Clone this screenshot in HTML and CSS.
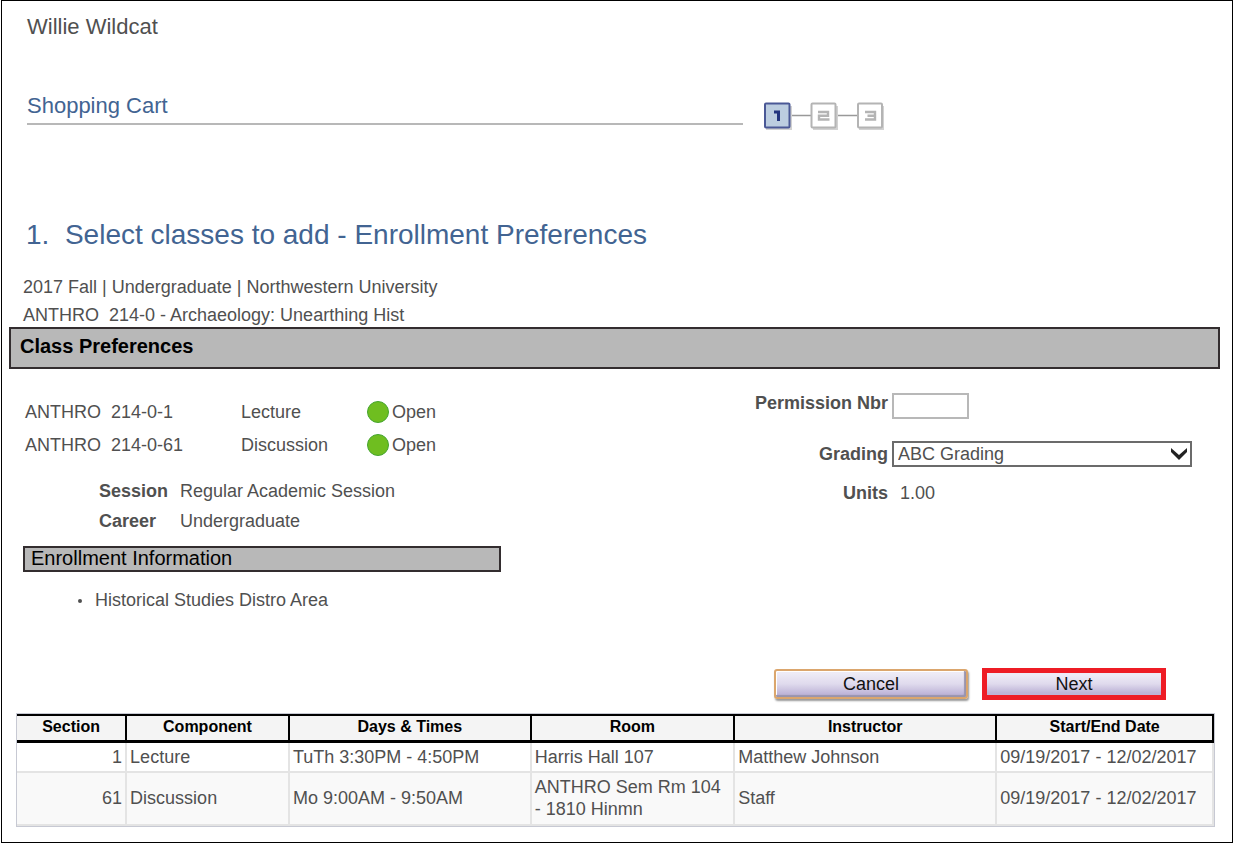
FILE: index.html
```html
<!DOCTYPE html>
<html lang="en">
<head>
<meta charset="utf-8">
<title>Shopping Cart - Enrollment Preferences</title>
<link rel="stylesheet" href="styles.css">
</head>
<body>
<main class="page">
  <p class="student">Willie Wildcat</p>

  <header class="cart-header">
    <h1 class="cart-title">Shopping Cart</h1>
    <svg class="steps" width="121" height="30" viewBox="0 0 121 30" role="img" aria-label="Step 1 of 3">
      <path d="M26 14.500H48M72 14.500H94M119 14.500H121" stroke="#999" stroke-width="1.500"/>
      <g fill="none" stroke="#d2d2d2" stroke-width="2">
        <path d="M3 28H28V5M50 28H74V5M96 28H120V5"/>
      </g>
      <rect x="2" y="2.500" width="24.500" height="24" rx="1" fill="#bccde0" stroke="#4a5896" stroke-width="2"/>
      <rect x="48.500" y="2.500" width="24" height="24" rx="1" fill="#fff" stroke="#b4b4b4" stroke-width="2"/>
      <rect x="95" y="2.500" width="24" height="24" rx="1" fill="#fff" stroke="#b4b4b4" stroke-width="2"/>
      <path d="M11 11H15.500V20" fill="none" stroke="#23357f" stroke-width="3"/>
      <path d="M55 11H65V14.800H56V18.500H66.500" fill="none" stroke="#b4b4b4" stroke-width="2.400"/>
      <path d="M102 11H112V18.500H102M104.500 14.800H111.500" fill="none" stroke="#b4b4b4" stroke-width="2.400"/>
    </svg>
  </header>

  <h2 class="step-title">1.&nbsp; Select classes to add - Enrollment Preferences</h2>

  <div class="context">
    <p>2017 Fall | Undergraduate | Northwestern University</p>
    <p>ANTHRO&nbsp; 214-0 - Archaeology: Unearthing Hist</p>
  </div>

  <h3 class="band">Class Preferences</h3>

  <div class="preferences">
    <section class="details">
      <ul class="classes">
        <li><span>ANTHRO&nbsp; 214-0-1</span><span>Lecture</span><span class="status"><i class="dot"></i>Open</span></li>
        <li><span>ANTHRO&nbsp; 214-0-61</span><span>Discussion</span><span class="status"><i class="dot"></i>Open</span></li>
      </ul>
      <dl class="facts">
        <dt>Session</dt><dd>Regular Academic Session</dd>
        <dt>Career</dt><dd>Undergraduate</dd>
      </dl>
      <h4 class="sub-band">Enrollment Information</h4>
      <ul class="info"><li>Historical Studies Distro Area</li></ul>
    </section>

    <form class="options">
      <label class="label" for="permission">Permission Nbr</label>
      <input class="permission" id="permission" type="text">
      <label class="label grading-label" for="grading">Grading</label>
      <div class="select-wrap">
        <select class="grading" id="grading"><option>ABC Grading</option></select>
        <svg class="chevron" width="18" height="12" viewBox="0 0 18 12" aria-hidden="true"><path d="M1 0L9 7L17 0V4L9 12L1 4Z" fill="#222"/></svg>
      </div>
      <span class="label">Units</span>
      <span class="units">1.00</span>
    </form>
  </div>

  <div class="actions">
    <button class="button cancel" type="button">Cancel</button>
    <button class="button next" type="button">Next</button>
  </div>

  <table class="schedule">
    <colgroup><col class="c-section"><col class="c-component"><col class="c-days"><col class="c-room"><col class="c-instructor"><col class="c-date"></colgroup>
    <thead>
      <tr><th>Section</th><th>Component</th><th>Days &amp; Times</th><th>Room</th><th>Instructor</th><th>Start/End Date</th></tr>
    </thead>
    <tbody>
      <tr><td class="num">1</td><td>Lecture</td><td>TuTh 3:30PM - 4:50PM</td><td>Harris Hall 107</td><td>Matthew Johnson</td><td>09/19/2017 - 12/02/2017</td></tr>
      <tr><td class="num">61</td><td>Discussion</td><td>Mo 9:00AM - 9:50AM</td><td>ANTHRO Sem Rm 104 - 1810 Hinmn</td><td>Staff</td><td>09/19/2017 - 12/02/2017</td></tr>
    </tbody>
  </table>
</main>
</body>
</html>
```
FILE: styles.css
```css
* { box-sizing: border-box; }

body {
  margin: 0;
  background: #fff;
  color: #505050;
  font: 18px/20px "Liberation Sans", Arial, sans-serif;
}

h1, h2, h3, h4, p, ul, dl, dd { margin: 0; padding: 0; }
ul { list-style: none; }

.page {
  margin: 0 1px 1px;
  padding: 13px 12px 15px 7px;
  border: 1px solid #000;
}

.student {
  margin-left: 18px;
  font-size: 22px;
  line-height: 26px;
}

.cart-header {
  display: flex;
  align-items: flex-end;
  gap: 20px;
  margin: 53px 0 0 18px;
}

.cart-title {
  flex: 0 0 60%;
  padding-bottom: 4px;
  border-bottom: 2px solid #b8b8b8;
  color: #426492;
  font-size: 22px;
  font-weight: normal;
  line-height: 26px;
}

.steps {
  flex: none;
  margin-bottom: -6px;
}

.step-title {
  margin: 94px 0 0 17px;
  color: #426492;
  font-size: 28px;
  font-weight: normal;
  line-height: 32px;
}

.context {
  display: grid;
  gap: 8px;
  margin: 26px 0 2px 14px;
}

.band, .sub-band {
  border: 2px solid #332d2f;
  background: #b8b8b8;
  color: #000;
  font-size: 20px;
}

.band {
  padding: 6px 9px 10px;
  line-height: 22px;
}

.preferences {
  display: flex;
  justify-content: space-between;
  padding: 24px 28px 0 14px;
}

.details {
  flex: 0 1 478px;
  padding-top: 8px;
}

.classes {
  display: grid;
  gap: 11px;
  padding-left: 2px;
}

.classes li {
  display: grid;
  grid-template-columns: 216px 126px auto;
  align-items: center;
  line-height: 22px;
}

.status {
  display: flex;
  align-items: center;
  gap: 3px;
}

.dot {
  width: 22px;
  height: 22px;
  border: 1px solid #45a52f;
  border-radius: 50%;
  background: #6fbe20;
}

.facts {
  display: grid;
  grid-template-columns: 81px auto;
  row-gap: 10px;
  margin: 25px 0 15px 76px;
}

.facts dt, .label { font-weight: bold; }

.sub-band {
  padding: 0 6px 2px;
  font-weight: normal;
  line-height: 20px;
}

.info {
  margin-top: 18px;
  padding-left: 72px;
}

.info li::before {
  content: "";
  float: left;
  width: 4px;
  height: 4px;
  margin: 9px 0 0 -17px;
  border-radius: 50%;
  background: #505050;
}

.options {
  display: grid;
  grid-template-columns: auto 300px;
  grid-template-rows: 48px 42px 20px;
  column-gap: 4px;
  align-content: start;
  align-items: start;
}

.label { text-align: right; }

.grading-label { line-height: 26px; }

.permission {
  width: 77px;
  height: 26px;
  padding: 0 4px;
  border: 2px solid #b8b8b8;
  font: inherit;
}

.select-wrap { position: relative; }

.grading {
  width: 100%;
  height: 26px;
  padding: 0 4px;
  border: 2px solid #6b6b6b;
  border-radius: 0;
  background: #fff;
  color: #505050;
  font: inherit;
  appearance: none;
}

.chevron {
  position: absolute;
  top: 7px;
  right: 4px;
  pointer-events: none;
}

.units { padding-left: 8px; }

.actions {
  display: flex;
  align-items: center;
  justify-content: flex-end;
  gap: 14px;
  margin: 58px 54px 13px 0;
}

.button {
  padding: 0;
  background: linear-gradient(#eeebf6 10%, #dfdaed 50%, #bdb3d6 90%);
  color: #111;
  font: inherit;
}

.cancel {
  width: 194px;
  height: 30px;
  border: 2px solid #dba66d;
  border-radius: 3px;
  box-shadow: inset -2px -2px 1px #9994ad, inset 1px 1px 0 #fff, 1px 2px 2px #999;
}

.next {
  width: 184px;
  height: 32px;
  border: 5px solid #ee1c25;
}

.schedule {
  width: calc(100% - 12px);
  margin-left: 7px;
  border: 1px solid #c7c9d3;
  border-collapse: separate;
  border-spacing: 0;
  table-layout: fixed;
}

.c-section { width: 9.2%; }
.c-component { width: 13.6%; }
.c-days { width: 20.2%; }
.c-room { width: 17%; }
.c-instructor { width: 21.9%; }
.c-date { width: 18.1%; }

.schedule th {
  height: 29px;
  padding: 0 0 2px;
  border: solid #000;
  border-width: 2px 2px 3px 0;
  background: #f4f4f4;
  color: #000;
  font-size: 16px;
}

.schedule td {
  padding: 3px;
  border: solid #e4e4e4;
  border-width: 0 2px 2px 0;
  line-height: 22px;
}

.schedule tbody tr:last-child td {
  padding-bottom: 4px;
  background: #f9f9f9;
}

.schedule .num { text-align: right; }
```
